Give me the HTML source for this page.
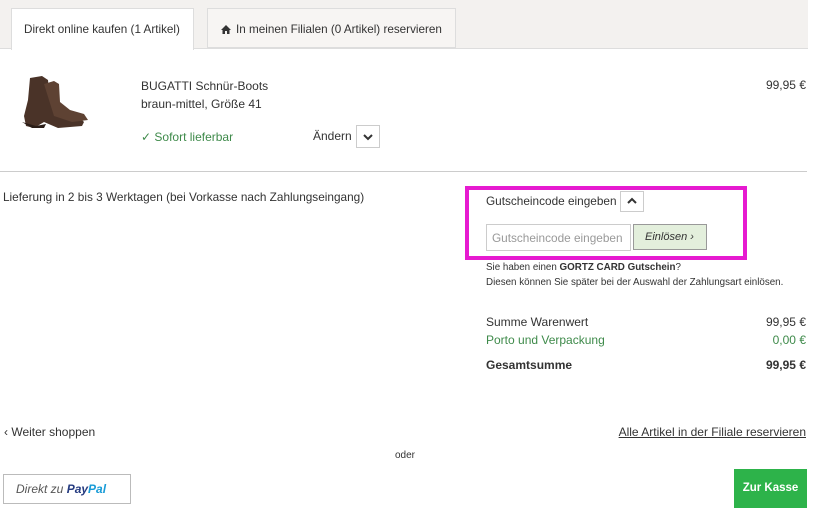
<!DOCTYPE html>
<html><head><meta charset="utf-8"><style>
*{margin:0;padding:0;box-sizing:border-box}
body{width:815px;height:511px;background:#fff;font-family:"Liberation Sans",sans-serif;color:#333;font-size:12px;position:relative;overflow:hidden}
.a{position:absolute;white-space:nowrap}
.r{text-align:right}
.g{color:#3e8a4a}
</style></head><body>
<div class="a" style="left:0;top:0;width:808px;height:49px;background:#f3f1ef;border-bottom:1px solid #ddd"></div>
<div class="a" style="left:11px;top:8px;width:183px;height:42px;background:#fff;border:1px solid #ddd;border-bottom:none;font-size:11.7px;color:#333;padding:14px 0 0 12px">Direkt online kaufen (1 Artikel)</div>
<div class="a" style="left:207px;top:8px;width:249px;height:40px;background:#f7f5f3;border:1px solid #ddd;font-size:11.7px;padding:14px 0 0 13px"><svg width="10" height="9" viewBox="0 0 10 9" style="vertical-align:-1px;margin-right:5px"><path d="M5 0L0 5h1.5v4h2.5V6h2v3h2.5V5H10z" fill="#333"/></svg>In meinen Filialen (0 Artikel) reservieren</div>
<svg class="a" style="left:22px;top:74px" width="72" height="58" viewBox="0 0 72 58"><path d="M8 4l12-2 6 4 2 22 14 10 14 4 6 6-2 4-24 2-14-6-10 6-8-2-2-10 4-16z" fill="#4a3328"/><path d="M22 10l10-3 5 3 1 18 10 8 14 4 4 6-16 2-18-6z" fill="#5e4233"/><path d="M0 48l14 4 10-2-2 4-12 0z" fill="#2a1d17"/></svg>
<div class="a" style="left:141px;top:77px;font-size:12px;line-height:18px">BUGATTI Schnür-Boots<br>braun-mittel, Größe 41</div>
<div class="a g" style="left:141px;top:130px;font-size:12px">✓ Sofort lieferbar</div>
<div class="a" style="left:313px;top:129px;font-size:12px">Ändern</div>
<div class="a" style="left:356px;top:125px;width:24px;height:23px;border:1px solid #ccc"><svg width="22" height="21" viewBox="0 0 22 21"><path d="M7 9l4 4 4-4" stroke="#333" stroke-width="2" fill="none"/></svg></div>
<div class="a r" style="right:9px;top:78px;font-size:12px">99,95 €</div>
<div class="a" style="left:0;top:171px;width:807px;height:1px;background:#ccc"></div>
<div class="a" style="left:3px;top:190px;font-size:11.8px">Lieferung in 2 bis 3 Werktagen (bei Vorkasse nach Zahlungseingang)</div>
<div class="a" style="left:465px;top:186px;width:282px;height:74px;border:4px solid #e61ad0"></div>
<div class="a" style="left:486px;top:194px;font-size:11.8px">Gutscheincode eingeben</div>
<div class="a" style="left:620px;top:191px;width:24px;height:21px;border:1px solid #ccc"><svg width="22" height="19" viewBox="0 0 22 19"><path d="M7 11l4-4 4 4" stroke="#333" stroke-width="2" fill="none"/></svg></div>
<div class="a" style="left:486px;top:224px;width:145px;height:27px;border:1px solid #ccc;color:#999;font-size:11.8px;padding:6px 0 0 5px">Gutscheincode eingeben</div>
<div class="a" style="left:633px;top:224px;width:74px;height:26px;border:1px solid #999;background:#e3efdc;font-size:11px;font-style:italic;padding:6px 0 0 11px">Einlösen ›</div>
<div class="a" style="left:486px;top:260px;font-size:9.8px;line-height:15px">Sie haben einen <b>GORTZ CARD Gutschein</b>?<br>Diesen können Sie später bei der Auswahl der Zahlungsart einlösen.</div>
<div class="a" style="left:486px;top:315px;font-size:12px">Summe Warenwert</div>
<div class="a r" style="right:9px;top:315px;font-size:12px">99,95 €</div>
<div class="a g" style="left:486px;top:333px;font-size:12px">Porto und Verpackung</div>
<div class="a r g" style="right:9px;top:333px;font-size:12px">0,00 €</div>
<div class="a" style="left:486px;top:358px;font-size:12px;font-weight:bold">Gesamtsumme</div>
<div class="a r" style="right:9px;top:358px;font-size:12px;font-weight:bold">99,95 €</div>
<div class="a" style="left:4px;top:425px;font-size:12px">‹ Weiter shoppen</div>
<div class="a r" style="right:9px;top:425px;font-size:12px;text-decoration:underline">Alle Artikel in der Filiale reservieren</div>
<div class="a" style="left:395px;top:450px;font-size:10px">oder</div>
<div class="a" style="left:3px;top:474px;width:128px;height:30px;border:1px solid #bbb;font-size:12px;font-style:italic;padding:7px 0 0 12px;color:#555">Direkt zu <b style="color:#253b80">Pay</b><b style="color:#179bd7">Pal</b></div>
<div class="a" style="left:734px;top:469px;width:73px;height:39px;background:#2db34a;color:#fff;font-weight:bold;font-size:11.5px;text-align:center;padding-top:13px">Zur Kasse</div>
</body></html>
